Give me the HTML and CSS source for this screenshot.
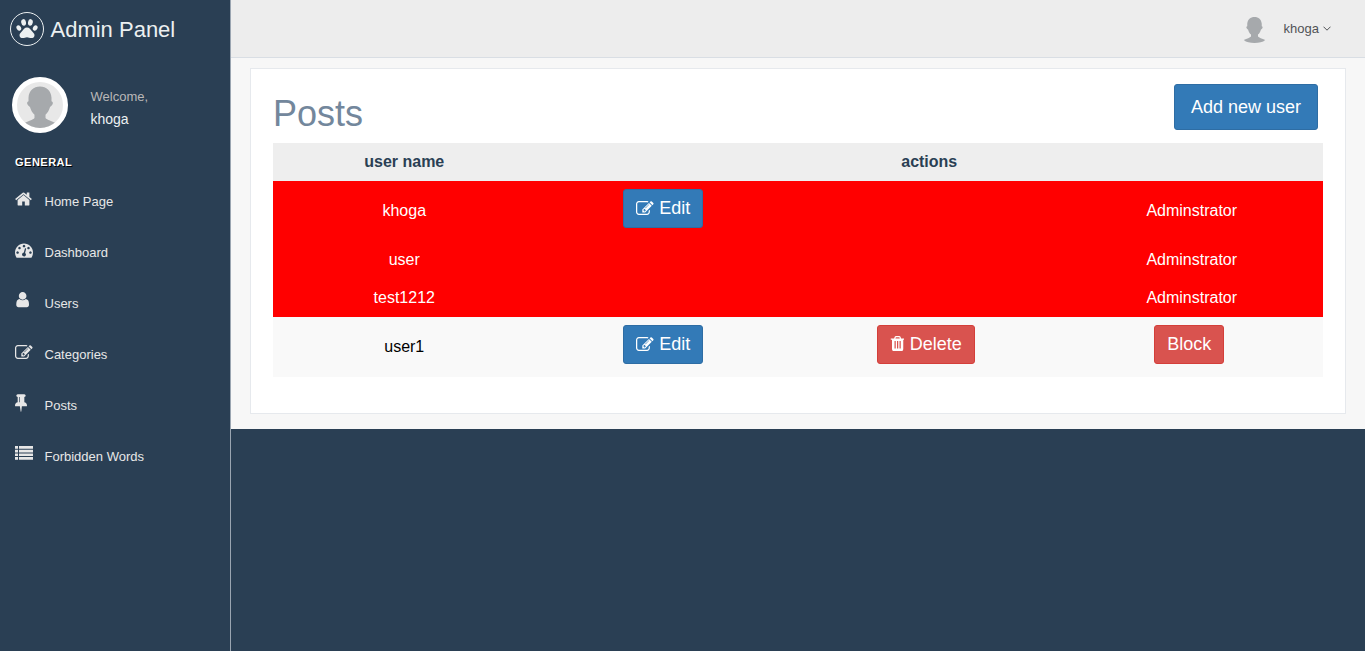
FILE: index.html
```html
<!DOCTYPE html>
<html lang="en">
<head>
    <meta charset="UTF-8">
    <meta name="viewport" content="width=device-width, initial-scale=1.0">
    <title>Admin Panel</title>
    <link rel="stylesheet" href="styles.css">
</head>
<body>
    <svg class="defs" width="0" height="0">
        <symbol id="avatar-person" viewBox="0 0 100 100">
            <path d="M50 10c14 0 24 9 25 24v8c3 1 4 4 2 7-1 2-3 4-5 5-2 7-5 13-10 17v7c3 4 14 7 25 12-8 8-22 10-37 10s-29-2-37-10c11-5 22-8 25-12v-7c-5-4-8-10-10-17-2-1-4-3-5-5-2-3-1-6 2-7v-8c1-15 11-24 25-24z"/>
        </symbol>
        <symbol id="icon-edit" viewBox="0 128 1928 1408">
            <path d="M888 1184l116-116-152-152-116 116v56h96v96h56zm440-720q-16-16-33 1l-350 350q-17 17-1 33t33-1l350-350q17-17 1-33zm80 594v190q0 119-84.500 203.500t-203.500 84.500h-832q-119 0-203.500-84.500t-84.500-203.500v-832q0-119 84.500-203.500t203.500-84.500h832q63 0 117 25 15 7 18 23 3 17-9 29l-49 49q-14 14-32 8-23-6-45-6h-832q-66 0-113 47t-47 113v832q0 66 47 113t113 47h832q66 0 113-47t47-113v-126q0-13 9-22l64-64q15-15 35-7t20 29zm-96-738l288 288-672 672h-288v-288zm444 132l-92 92-288-288 92-92q28-28 68-28t68 28l152 152q28 28 28 68t-28 68z"/>
        </symbol>
        <symbol id="icon-trash" viewBox="128 128 1408 1536">
            <path fill-rule="evenodd" d="M704 1376v-704q0-14-9-23t-23-9h-64q-14 0-23 9t-9 23v704q0 14 9 23t23 9h64q14 0 23-9t9-23zm256 0v-704q0-14-9-23t-23-9h-64q-14 0-23 9t-9 23v704q0 14 9 23t23 9h64q14 0 23-9t9-23zm256 0v-704q0-14-9-23t-23-9h-64q-14 0-23 9t-9 23v704q0 14 9 23t23 9h64q14 0 23-9t9-23zm-544-992h448l-48-117q-7-9-17-11h-317q-10 2-17 11zm928 32v64q0 14-9 23t-23 9h-96v948q0 83-47 143.500t-113 60.500h-832q-66 0-113-58.500t-47-141.500v-952h-96q-14 0-23-9t-9-23v-64q0-14 9-23t23-9h309l70-167q15-37 54-63t79-26h320q40 0 79 26t54 63l70 167h309q14 0 23 9t9 23z"/>
        </symbol>
    </svg>

    <div class="app">
        <aside class="sidebar">
            <div class="brand">
                <span class="brand-logo">
                    <svg width="22" height="22" viewBox="0 0 22 22">
                        <ellipse cx="7.6" cy="4.400" rx="2.400" ry="3.300" transform="rotate(-10 7.6 4.400)"/>
                        <ellipse cx="14.400" cy="4.400" rx="2.400" ry="3.300" transform="rotate(10 14.400 4.400)"/>
                        <ellipse cx="2.800" cy="10" rx="2.200" ry="2.900" transform="rotate(-28 2.800 10)"/>
                        <ellipse cx="19.200" cy="10" rx="2.200" ry="2.900" transform="rotate(28 19.200 10)"/>
                        <path d="M11 9.500c2.400 0 3.600 2 5 3.700 1.200 1.400 2.500 2.300 2.500 4 0 1.900-1.500 2.900-3.200 2.900-1.700 0-2.800-.8-4.300-.8s-2.600.8-4.300.8c-1.700 0-3.200-1-3.200-2.900 0-1.700 1.300-2.600 2.500-4 1.400-1.700 2.600-3.700 5-3.700z"/>
                    </svg>
                </span>
                <span class="brand-name">Admin Panel</span>
            </div>

            <div class="profile">
                <span class="profile-pic">
                    <svg class="person" width="46" height="46"><use href="#avatar-person"/></svg>
                </span>
                <div class="profile-info">
                    <span class="welcome">Welcome,</span>
                    <span class="profile-name">khoga</span>
                </div>
            </div>

            <h3 class="menu-title">General</h3>
            <ul class="side-menu">
                <li>
                    <span class="menu-slot"><svg class="menu-icon" width="17" viewBox="64 128 1664 1536"><path d="M1472 992v480q0 26-19 45t-45 19h-384v-384h-256v384h-384q-26 0-45-19t-19-45v-480q0-1 .5-3t.5-3l575-474 575 474q1 2 1 6zm223-69l-62 74q-8 9-21 11h-3q-13 0-21-7l-692-577-692 577q-12 8-24 7-13-2-21-11l-62-74q-8-10-7-23.500t11-21.500l719-599q32-26 76-26t76 26l244 204v-195q0-14 9-23t23-9h192q14 0 23 9t9 23v408l219 182q10 8 11 21.500t-7 23.500z"/></svg></span>
                    <a href="#">Home Page</a>
                </li>
                <li>
                    <span class="menu-slot"><svg class="menu-icon" width="18" viewBox="0 128 1792 1536"><path d="M384 1152q0-53-37.500-90.500t-90.500-37.500-90.500 37.500-37.500 90.500 37.500 90.500 90.500 37.500 90.500-37.500 37.500-90.500zm192-448q0-53-37.500-90.500t-90.500-37.500-90.500 37.500-37.500 90.500 37.500 90.500 90.500 37.500 90.500-37.500 37.500-90.500zm428 481l101-382q6-26-7.500-48.500t-38.500-29.500-48 6.500-30 39.500l-101 382q-60 5-107 43.500t-63 98.500q-20 77 20 146t117 89 146-20 89-117q16-60-6-117t-72-91zm660-33q0-53-37.500-90.500t-90.500-37.500-90.500 37.500-37.500 90.500 37.500 90.500 90.500 37.500 90.500-37.500 37.500-90.500zm-640-640q0-53-37.500-90.500t-90.500-37.500-90.500 37.500-37.500 90.500 37.500 90.500 90.500 37.500 90.500-37.500 37.500-90.500zm448 192q0-53-37.500-90.500t-90.500-37.500-90.500 37.500-37.500 90.500 37.500 90.500 90.500 37.500 90.500-37.500 37.500-90.500zm320 448q0 261-141 483-19 29-54 29h-1402q-35 0-54-29-141-221-141-483 0-182 71-348t191-286 286-191 348-71 348 71 286 191 191 286 71 348z"/></svg></span>
                    <a href="#">Dashboard</a>
                </li>
                <li>
                    <span class="menu-slot"><svg class="menu-icon" width="14" viewBox="128 256 1408 1536"><path d="M1536 1399q0 109-62.500 187t-150.500 78h-854q-88 0-150.500-78t-62.500-187q0-85 8.500-160.500t31.500-152 58.500-131 94-89 134.500-34.500q131 128 313 128t313-128q76 0 134.500 34.500t94 89 58.500 131 31.500 152 8.500 160.500zm-256-887q0 159-112.500 271.500t-271.500 112.500-271.500-112.500-112.500-271.500 112.500-271.500 271.500-112.500 271.500 112.500 112.500 271.500z"/></svg></span>
                    <a href="#">Users</a>
                </li>
                <li>
                    <span class="menu-slot"><svg class="menu-icon" width="19"><use href="#icon-edit"/></svg></span>
                    <a href="#">Categories</a>
                </li>
                <li>
                    <span class="menu-slot"><svg class="menu-icon" width="12" viewBox="320 128 1152 1664"><path d="M800 864v-448q0-14-9-23t-23-9-23 9-9 23v448q0 14 9 23t23 9 23-9 9-23zm672 352q0 26-19 45t-45 19h-429l-51 483q-2 12-10.500 20.500t-20.500 8.500h-1q-27 0-32-27l-76-485h-404q-26 0-45-19t-19-45q0-123 78.500-221.500t177.500-98.500v-512q-52 0-90-38t-38-90 38-90 90-38h640q52 0 90 38t38 90-38 90-90 38v512q99 0 177.500 98.500t78.500 221.500z"/></svg></span>
                    <a href="#">Posts</a>
                </li>
                <li>
                    <span class="menu-slot"><svg class="menu-icon" width="18" viewBox="0 1 18 18">
                        <path d="M0 2h3v2.700H0zM4 2h14v2.700H4zM0 5.700h3v2.700H0zM4 5.700h14v2.700H4zM0 9.400h3v2.700H0zM4 9.400h14v2.700H4zM0 13.100h3v2.700H0zM4 13.100h14v2.700H4z"/>
                    </svg></span>
                    <a href="#">Forbidden Words</a>
                </li>
            </ul>
        </aside>

        <main class="main">
            <header class="topnav">
                <a class="user-menu" href="#">
                    <svg class="person nav-person" width="29" height="29"><use href="#avatar-person"/></svg>
                    <span>khoga</span>
                    <svg class="caret" width="8" height="5" viewBox="0 0 8 5"><path d="M.5.7 4 4.200 7.500.7"/></svg>
                </a>
            </header>

            <div class="content">
                <section class="panel">
                    <div class="panel-head">
                        <h1>Posts</h1>
                        <a class="btn btn-primary btn-lg" href="#">Add new user</a>
                    </div>
                    <table class="users">
                        <thead>
                            <tr>
                                <th>user name</th>
                                <th colspan="3">actions</th>
                            </tr>
                        </thead>
                        <tbody>
                            <tr class="blocked">
                                <td>khoga</td>
                                <td class="cell-btn"><a class="btn btn-primary btn-edit" href="#"><svg class="btn-icon icon-edit" width="19" height="14"><use href="#icon-edit"/></svg> Edit</a></td>
                                <td></td>
                                <td>Adminstrator</td>
                            </tr>
                            <tr class="blocked">
                                <td>user</td>
                                <td></td>
                                <td></td>
                                <td>Adminstrator</td>
                            </tr>
                            <tr class="blocked">
                                <td>test1212</td>
                                <td></td>
                                <td></td>
                                <td>Adminstrator</td>
                            </tr>
                            <tr class="striped">
                                <td>user1</td>
                                <td class="cell-btn"><a class="btn btn-primary btn-edit" href="#"><svg class="btn-icon icon-edit" width="19" height="14"><use href="#icon-edit"/></svg> Edit</a></td>
                                <td class="cell-btn"><a class="btn btn-danger btn-delete" href="#"><svg class="btn-icon icon-trash" width="14" height="15"><use href="#icon-trash"/></svg> Delete</a></td>
                                <td class="cell-btn"><a class="btn btn-danger" href="#">Block</a></td>
                            </tr>
                        </tbody>
                    </table>
                </section>
            </div>
        </main>
    </div>
</body>
</html>
```

FILE: styles.css
```css
* {
    box-sizing: border-box;
}

body {
    margin: 0;
    min-height: 651px;
    background-color: #2a3f54;
    color: #73879c;
    font-family: "Liberation Sans", Arial, sans-serif;
    font-size: 13px;
}

a {
    color: inherit;
    text-decoration: none;
}

.defs {
    position: absolute;
}

.app {
    display: flex;
    align-items: flex-start;
}

/* sidebar */
.sidebar {
    flex: none;
    width: 231px;
    min-height: 651px;
    border-right: 1px solid #9aa5b1;
    color: #ecf0f1;
}

.brand {
    display: flex;
    align-items: center;
    gap: 6.500px;
    height: 57px;
    padding: 1px 0 0 10px;
    font-size: 22px;
}

.brand-name {
    margin-top: 2px;
}

.brand-logo {
    display: flex;
    align-items: center;
    justify-content: center;
    width: 34px;
    height: 34px;
    border: 1px solid #ecf0f1;
    border-radius: 50%;
}

.brand-logo svg {
    fill: #ecf0f1;
}

.person {
    fill: #a6a9ac;
}

.profile {
    display: flex;
    margin-top: 20px;
    padding-left: 12px;
}

.profile-pic {
    display: flex;
    align-items: center;
    justify-content: center;
    width: 56px;
    height: 56px;
    overflow: hidden;
    border: 5px solid #fff;
    border-radius: 50%;
    background-color: #e8e8e8;
}

.profile-info {
    display: flex;
    flex-direction: column;
    padding: 11px 0 0 22.500px;
}

.welcome {
    color: #bab8b8;
    line-height: 17px;
}

.profile-name {
    margin-top: 6px;
    font-size: 14px;
    line-height: 17px;
}

.menu-title {
    margin: 23px 0 0;
    padding-left: 15px;
    color: #fff;
    font-size: 11px;
    font-weight: bold;
    line-height: 13px;
    letter-spacing: .5px;
    text-transform: uppercase;
    text-shadow: 1px 1px #000;
}

.side-menu {
    margin: 7px 0 0;
    padding: 0;
    list-style: none;
}

.side-menu li {
    display: flex;
    align-items: center;
    height: 51px;
    padding-left: 15px;
    color: #e7e7e7;
}

.menu-slot {
    display: flex;
    flex: none;
    width: 29.500px;
    margin-top: -6px;
}

.menu-icon {
    height: 18px;
    fill: #e7e7e7;
}

/* top bar */
.main {
    flex: 1;
}

.topnav {
    display: flex;
    justify-content: flex-end;
    height: 58px;
    padding-right: 34px;
    border-bottom: 1px solid #d9dee4;
    background-color: #ededed;
}

.user-menu {
    display: flex;
    align-items: center;
    height: 57px;
    color: #515356;
}

.nav-person {
    margin-right: 14.500px;
}

.caret {
    margin-left: 4px;
    fill: none;
    stroke: #515356;
    stroke-width: 1;
}

/* posts panel */
.content {
    padding: 10px 19px 15px;
    background-color: #f7f7f7;
}

.panel {
    padding: 15px 22px 36px;
    border: 1px solid #e6e9ed;
    background-color: #fff;
}

.panel-head {
    display: flex;
    justify-content: space-between;
    height: 59px;
    padding-right: 5px;
}

.panel-head h1 {
    margin: 8px 0 0;
    font-size: 36px;
    font-weight: 500;
    line-height: 43px;
}

.btn {
    display: inline-block;
    padding: 6px 12px;
    margin: 0 5px 5px 0;
    border: 1px solid transparent;
    border-radius: 3px;
    color: #fff;
    font-size: 18px;
    line-height: 25px;
    white-space: nowrap;
}

.btn-edit {
    margin-right: 7px;
}

.btn-delete {
    margin-right: 7px;
}

.btn-lg {
    align-self: flex-start;
    margin: 0;
    padding: 10px 16px;
    line-height: 24px;
}

.btn-primary {
    border-color: #2e6da4;
    background-color: #337ab7;
}

.btn-danger {
    border-color: #d43f3a;
    background-color: #d9534f;
}

.btn-icon {
    fill: #fff;
}

.icon-edit {
    margin-right: -1px;
    vertical-align: -1px;
}

.icon-trash {
    margin-right: 1px;
    vertical-align: -1px;
}

.users {
    width: 100%;
    table-layout: fixed;
    border-collapse: collapse;
    font-size: 16px;
    line-height: 22.400px;
    text-align: center;
}

.users th {
    padding: 8px;
    background-color: #eee;
    color: #2a3f54;
    font-weight: bold;
    line-height: 22px;
}

.users th:first-child {
    width: 25%;
}

.users td {
    padding: 8.500px 8px 7.500px;
}

.users .cell-btn {
    padding: 8px 8px 7.400px;
    vertical-align: top;
}

.blocked {
    background-color: #f00;
    color: #fff;
}

.striped {
    background-color: #f9f9f9;
    color: #000;
}
```
